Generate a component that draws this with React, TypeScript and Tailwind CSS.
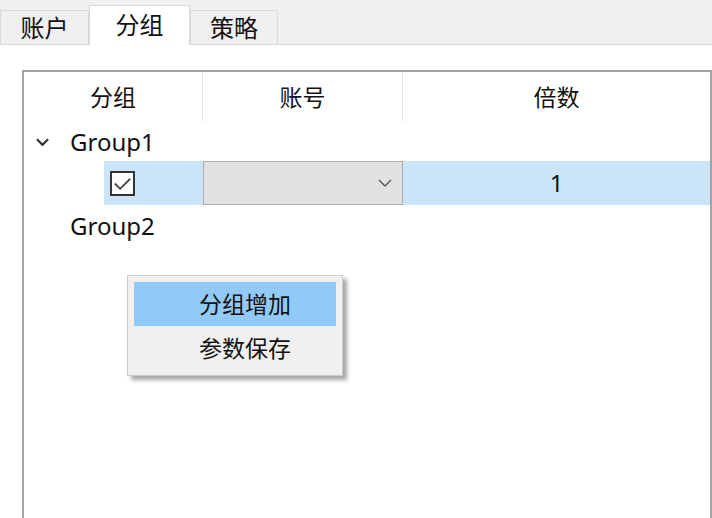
import React from "react";

function Chevron({ className, weight = 1.4 }: { className?: string; weight?: number }) {
  return (
    <svg className={className} viewBox="0 0 14 8" fill="none">
      <path d="M1 1l6 6 6-6" stroke="currentColor" strokeWidth={weight} />
    </svg>
  );
}

function Tab({ label, active, width }: { label: string; active?: boolean; width: string }) {
  return (
    <div
      className={
        active
          ? `${width} h-[40px] -mb-px bg-white border border-b-0 border-[#d9d9d9] flex items-center justify-center pb-[1px]`
          : `${width} h-[34px] bg-[#f0f0f0] border border-b-0 border-[#d9d9d9] flex items-center justify-center`
      }
    >
      {label}
    </div>
  );
}

export default function App() {
  return (
    <div
      className="relative w-[712px] h-[518px] overflow-hidden bg-white text-[#111]"
      style={{ fontFamily: '"Noto Sans", "Noto Sans CJK SC", sans-serif' }}
    >
      {/* tab strip */}
      <div className="h-[45px] bg-[#f0f0f0] border-b border-[#dadada] flex items-end text-[24px] leading-none">
        <Tab label="账户" width="w-[89px]" />
        <Tab label="分组" width="w-[101px]" active />
        <Tab label="策略" width="w-[88px]" />
      </div>

      {/* grid panel */}
      <div className="pl-[22px] pt-[25px]">
        <div className="h-[460px] border-2 border-b-0 border-[#a0a2a6] text-[23px] leading-none">
          <div className="flex h-[50px]">
            <div className="w-[179px] flex items-center justify-center border-r border-[#e6e6e6]">分组</div>
            <div className="w-[200px] flex items-center justify-center border-r border-[#e6e6e6]">账号</div>
            <div className="flex-1 flex items-center justify-center">倍数</div>
          </div>

          <div className="flex items-center h-[39px]">
            <Chevron className="w-[13px] h-[8px] ml-[12px] text-[#333]" weight={2.4} />
            <span className="ml-[21px] text-[24px]">Group1</span>
          </div>

          <div className="flex h-[44px] ml-[80px] bg-[#cbe4f8]">
            <div className="w-[99px] flex items-center">
              <div className="ml-[6px] w-[25px] h-[25px] border-2 border-[#333] bg-white flex items-center justify-center">
                <svg viewBox="0 0 16 16" className="w-[19px] h-[19px]" fill="none">
                  <path d="M1.5 8l4.5 4.5 8.5-8.5" stroke="#444" strokeWidth="1.5" />
                </svg>
              </div>
            </div>
            <div className="w-[200px] bg-[#e1e1e1] border border-[#adadad] flex items-center justify-end pr-[10px]">
              <Chevron className="w-[14px] h-[8px] text-[#555]" />
            </div>
            <div className="flex-1 flex items-center justify-center text-[24px]">1</div>
          </div>

          <div className="flex items-center h-[42px] pl-[46px] text-[24px]">Group2</div>
        </div>
      </div>

      {/* context menu */}
      <div className="absolute left-[127px] top-[275px] w-[216px] h-[101px] bg-[#f0f0f0] border border-[#cccccc] p-[6px] shadow-[4px_4px_4px_rgba(0,0,0,0.35)] text-[23px] leading-none">
        <div className="h-[44px] bg-[#91c9f7] flex items-center justify-center pl-[20px]">分组增加</div>
        <div className="h-[44px] flex items-center justify-center pl-[20px]">参数保存</div>
      </div>
    </div>
  );
}
